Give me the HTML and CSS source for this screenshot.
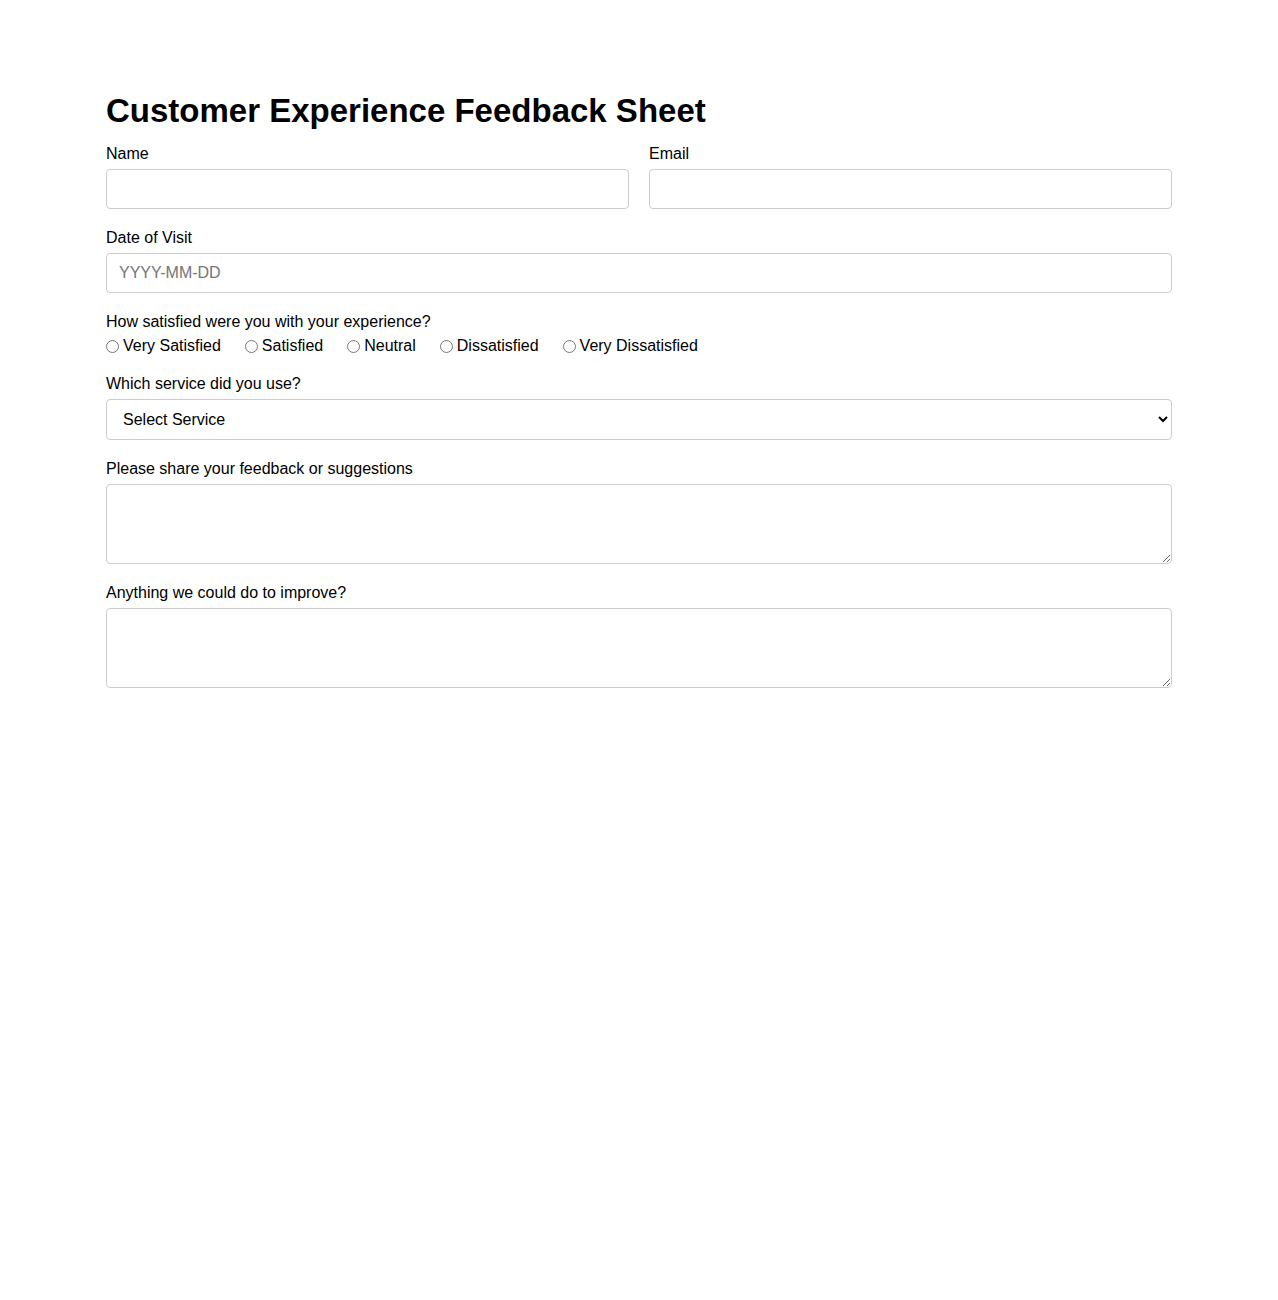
FILE: index.html
```html
<!DOCTYPE html>
<html lang="en">
<head>
<meta charset="utf-8">
<title>Customer Experience Feedback Sheet</title>
<link rel="stylesheet" href="styles.css">
</head>
<body>
<main class="sheet">
  <h1 class="title">Customer Experience Feedback Sheet</h1>
  <form class="form">
    <div class="row">
      <div class="group">
        <label class="label" for="name">Name</label>
        <input class="field" type="text" id="name">
      </div>
      <div class="group">
        <label class="label" for="email">Email</label>
        <input class="field" type="email" id="email">
      </div>
    </div>
    <div class="group">
      <label class="label" for="date">Date of Visit</label>
      <input class="field" type="text" id="date" placeholder="YYYY-MM-DD">
    </div>
    <div class="group">
      <span class="label">How satisfied were you with your experience?</span>
      <div class="radios">
        <label class="radio"><input type="radio" name="sat">Very Satisfied</label>
        <label class="radio"><input type="radio" name="sat">Satisfied</label>
        <label class="radio"><input type="radio" name="sat">Neutral</label>
        <label class="radio"><input type="radio" name="sat">Dissatisfied</label>
        <label class="radio"><input type="radio" name="sat">Very Dissatisfied</label>
      </div>
    </div>
    <div class="group">
      <label class="label" for="service">Which service did you use?</label>
      <select class="field select" id="service">
        <option>Select Service</option>
        <option>Dining</option>
        <option>Delivery</option>
        <option>Support</option>
      </select>
    </div>
    <div class="group">
      <label class="label" for="feedback">Please share your feedback or suggestions</label>
      <textarea class="field area" id="feedback"></textarea>
    </div>
    <div class="group">
      <label class="label" for="improve">Anything we could do to improve?</label>
      <textarea class="field area" id="improve"></textarea>
    </div>
  </form>
</main>
</body>
</html>
```
FILE: styles.css
```css
* { box-sizing: border-box; }
html, body { margin: 0; padding: 0; background: #fff; }
body {
  font-family: "Liberation Sans", Arial, sans-serif;
  color: #000;
  font-size: 16px;
}
.sheet {
  width: 1066px;
  margin: 0 auto;
  padding-top: 92px;
}
.title {
  font-size: 33px;
  font-weight: bold;
  margin: 0 0 16px;
  line-height: 37px;
}
.row {
  display: grid;
  grid-template-columns: 1fr 1fr;
  column-gap: 20px;
}
.group {
  display: flex;
  flex-direction: column;
  margin-bottom: 20px;
}
.label {
  display: block;
  font-size: 16px;
  line-height: 18px;
  margin-bottom: 6px;
}
.field {
  display: block;
  width: 100%;
  height: 40px;
  padding: 10px 12px;
  border: 1px solid #ccc;
  border-radius: 4px;
  font-family: "Liberation Sans", Arial, sans-serif;
  font-size: 16px;
  color: #000;
  background: #fff;
  margin: 0;
}
.field::placeholder { color: #757575; }
.select { padding: 0 12px; height: 41px; }
.area { height: 80px; resize: vertical; }
.radios {
  display: flex;
  gap: 24px;
  line-height: 18px;
}
.radio {
  display: inline-flex;
  align-items: center;
}
.radio input {
  width: 13px;
  height: 13px;
  margin: 0 4px 0 0;
}
```
